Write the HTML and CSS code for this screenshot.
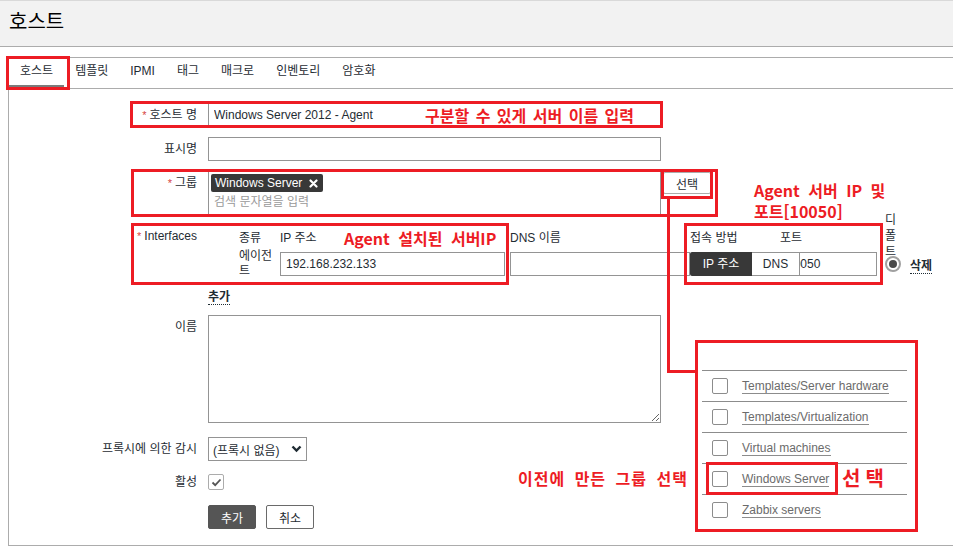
FILE: index.html
```html
<!DOCTYPE html>
<html lang="ko">
<head>
  <meta charset="UTF-8" />
  <meta name="viewport" content="width=device-width,initial-scale=1.0" />
  <title>호스트</title>
  <link rel="stylesheet" href="styles.css">
</head>
<body>
  <header class="page-header">
    <h1>호스트</h1>
  </header>

  <div class="content">
    <ul class="tabs">
      <li class="active">호스트</li>
      <li>템플릿</li>
      <li>IPMI</li>
      <li>태그</li>
      <li>매크로</li>
      <li>인벤토리</li>
      <li>암호화</li>
    </ul>

    <div class="form">
      <div class="label"><span class="star">*</span>호스트 명</div>
      <div><input class="text wide" value="Windows Server 2012 - Agent"></div>

      <div class="label">표시명</div>
      <div><input class="text wide" value=""></div>

      <div class="label"><span class="star">*</span>그룹</div>
      <div class="group-field">
        <div class="multiselect">
          <span class="chip">Windows Server
            <svg width="9" height="9" viewBox="0 0 9 9"><path d="M1.5 1.5 L7.5 7.5 M7.5 1.5 L1.5 7.5" stroke="#fff" stroke-width="2.2" stroke-linecap="round"/></svg>
          </span>
          <div class="placeholder">검색 문자열을 입력</div>
        </div>
        <button class="select-btn">선택</button>
      </div>

      <div class="label label-iface"><span class="star">*</span>Interfaces</div>
      <div class="iface">
        <span></span>
        <span>종류</span>
        <span>IP 주소</span>
        <span>DNS 이름</span>
        <span>접속 방법</span>
        <span>포트</span>
        <span class="default-head">디폴트</span>
        <span></span>

        <span></span>
        <span class="type">에이전트</span>
        <input class="text ip" value="192.168.232.133">
        <input class="text dns" value="">
        <div class="toggle"><span class="on">IP 주소</span><span class="off">DNS</span></div>
        <input class="text port" value="10050">
        <span class="radio"></span>
        <span class="remove"><a class="link">삭제</a></span>
      </div>

      <div></div>
      <div class="add-row"><a class="link">추가</a></div>

      <div class="label">이름</div>
      <div><textarea class="desc"></textarea></div>

      <div class="label">프록시에 의한 감시</div>
      <div>
        <div class="select">(프록시 없음)
          <svg width="11" height="8" viewBox="0 0 11 8"><path d="M1.5 1.5 L5.5 5.5 L9.5 1.5" fill="none" stroke="#1f2c33" stroke-width="2.4"/></svg>
        </div>
      </div>

      <div class="label label-check">활성</div>
      <div class="check-row">
        <span class="check">
          <svg width="13" height="13" viewBox="0 0 13 13"><path d="M2.5 6.5 L5.2 9.2 L10.5 3.5" fill="none" stroke="#555" stroke-width="1.8"/></svg>
        </span>
      </div>

      <div></div>
      <div class="buttons">
        <button class="btn btn-main">추가</button>
        <button class="btn btn-alt">취소</button>
      </div>
    </div>
  </div>

  <ul class="group-list">
    <li><span class="box"></span><span class="name">Templates/Server hardware</span></li>
    <li><span class="box"></span><span class="name">Templates/Virtualization</span></li>
    <li><span class="box"></span><span class="name">Virtual machines</span></li>
    <li><span class="box"></span><span class="name">Windows Server</span></li>
    <li><span class="box"></span><span class="name">Zabbix servers</span></li>
  </ul>

  <!-- annotations -->
  <div class="mark mark-tab"></div>
  <div class="mark mark-host"></div>
  <div class="mark mark-group"></div>
  <div class="mark mark-pick"></div>
  <div class="mark mark-iface"></div>
  <div class="mark mark-conn"></div>
  <div class="mark mark-list"></div>
  <div class="mark mark-win"></div>
  <div class="wire wire-down"></div>
  <div class="wire wire-right"></div>

  <div class="note note-host">구분할 수 있게 서버 이름 입력</div>
  <div class="note note-iface">Agent 설치된 서버IP</div>
  <div class="note note-port">Agent 서버 IP 및</div>
  <div class="note note-port2">포트[10050]</div>
  <div class="note note-prev">이전에 만든 그룹 선택</div>
  <div class="note note-pick">선택</div>
</body>
</html>
```

FILE: styles.css
```css
html {
  overflow: hidden;
}

body {
  margin: 0;
  font-family: "Liberation Sans", "Noto Sans CJK KR", sans-serif;
  font-size: 12px;
  color: #1f2c33;
  background: #fff;
  position: relative;
}

.page-header {
  height: 45px;
  background: #f2f2f2;
  border-top: 1px solid #d9d9d9;
  border-bottom: 1px solid #acacac;
  padding-left: 9px;
}

.page-header h1 {
  margin: 0;
  font-size: 20px;
  font-weight: normal;
  line-height: 43px;
  color: #000;
}

.content {
  margin: 10px -1px 0 8px;
  height: 489px;
  box-sizing: border-box;
  border: 1px solid #acacac;
}

.tabs {
  display: flex;
  list-style: none;
  margin: 0;
  padding: 0;
  border-bottom: 1px solid #acacac;
}

.tabs li {
  padding: 0 11px;
  line-height: 27px;
  border-bottom: 3px solid transparent;
}

.tabs li.active {
  border-bottom-color: #7b7b7b;
}

.form {
  display: grid;
  grid-template-columns: 188px auto;
  column-gap: 11px;
  row-gap: 10px;
  padding-top: 14px;
  align-items: start;
}

.label {
  text-align: right;
  line-height: 24px;
  white-space: nowrap;
}

.label-iface {
  line-height: 22px;
}

.label-check {
  line-height: 22px;
}

.star {
  color: #d64541;
  font-size: 11px;
  margin-right: 3px;
}

.text {
  box-sizing: border-box;
  height: 24px;
  border: 1px solid #949494;
  padding: 0 5px;
  font: inherit;
  color: #1f2c33;
  background: #fff;
  outline: none;
  margin: 0;
}

.wide {
  width: 453px;
}

.group-field {
  display: flex;
  align-items: flex-start;
  gap: 2px;
}

.multiselect {
  box-sizing: border-box;
  width: 453px;
  height: 44px;
  border: 1px solid #949494;
  padding: 2px;
}

.chip {
  display: inline-flex;
  align-items: center;
  gap: 7px;
  height: 18px;
  padding: 0 5px 0 4px;
  background: #383838;
  color: #fff;
  border-radius: 2px;
}

.placeholder {
  color: #9a9a9a;
  padding-left: 3px;
  margin-top: 3px;
  line-height: 14px;
}

.select-btn {
  box-sizing: border-box;
  width: 48px;
  height: 22px;
  margin-top: 1px;
  border: 1px solid #acacac;
  border-radius: 2px;
  background: #fff;
  font: inherit;
  color: #1f2c33;
  padding: 0;
}

.iface {
  display: grid;
  grid-template-columns: 31px 41px 230px 180px 90px 105px 16px auto;
  grid-template-rows: 22px 30px;
  row-gap: 2px;
  align-items: center;
}

.default-head {
  width: 12px;
  line-height: 16px;
  margin: -13px 0;
}

.type {
  line-height: 15px;
}

.ip {
  width: 225px;
}

.dns {
  width: 180px;
}

.toggle {
  display: flex;
  width: 110px;
  height: 24px;
  position: relative;
  z-index: 1;
  line-height: 24px;
  text-align: center;
}

.toggle .on {
  width: 62px;
  background: #383838;
  color: #fff;
  border-radius: 2px 0 0 2px;
}

.toggle .off {
  width: 48px;
  box-sizing: border-box;
  background: #fff;
  border: 1px solid #949494;
  border-left: none;
  line-height: 22px;
}

.port {
  width: 97px;
  padding-left: 6px;
}

.radio {
  box-sizing: border-box;
  width: 16px;
  height: 16px;
  border-radius: 50%;
  border: 2px solid #a0a0a0;
  background: #fff;
  display: flex;
  align-items: center;
  justify-content: center;
}

.radio::after {
  content: "";
  width: 8px;
  height: 8px;
  border-radius: 50%;
  background: #4a4a4a;
}

.remove {
  padding-left: 9px;
}

.link {
  font-weight: bold;
  color: #1f2c33;
  border-bottom: 1px dotted #1f2c33;
  cursor: pointer;
}

.add-row {
  line-height: 16px;
}

.desc {
  display: block;
  box-sizing: border-box;
  width: 453px;
  height: 108px;
  border: 1px solid #949494;
  margin: 0 0 4px;
  font: inherit;
}

.select {
  box-sizing: border-box;
  display: inline-flex;
  align-items: center;
  justify-content: space-between;
  width: 99px;
  height: 24px;
  border: 1px solid #949494;
  padding: 0 4px 0 4px;
}

.check-row {
  height: 22px;
}

.check {
  box-sizing: border-box;
  display: flex;
  align-items: center;
  justify-content: center;
  width: 16px;
  height: 16px;
  margin-top: 3px;
  border: 1px solid #acacac;
  border-radius: 2px;
}

.buttons {
  display: flex;
  gap: 10px;
  margin-top: 2px;
}

.btn {
  box-sizing: border-box;
  width: 48px;
  height: 24px;
  border-radius: 2px;
  font: inherit;
  padding: 0;
}

.btn-main {
  background: #555;
  border: 1px solid #555;
  color: #fff;
}

.btn-alt {
  background: #fff;
  border: 1px solid #6a6a6a;
  color: #1f2c33;
}

/* group picker popup */
.group-list {
  position: absolute;
  left: 702px;
  top: 340px;
  width: 205px;
  margin: 0;
  padding: 30px 0 0;
  list-style: none;
  background: #fff;
}

.group-list li {
  height: 30px;
  border-top: 1px solid #8c8c8c;
  display: flex;
  align-items: center;
  padding-left: 10px;
}

.group-list .box {
  box-sizing: border-box;
  width: 16px;
  height: 16px;
  border: 1px solid #8c8c8c;
  border-radius: 2px;
  margin-right: 14px;
}

.group-list .name {
  color: #6b6b6b;
  line-height: 14px;
  border-bottom: 1px solid #8c8c8c;
}

/* red annotations */
.mark {
  position: absolute;
  box-sizing: border-box;
  border: 3px solid #ed1c24;
}

.mark-tab { left: 6px; top: 56px; width: 64px; height: 34px; }
.mark-host { left: 130px; top: 101px; width: 533px; height: 27px; }
.mark-group { left: 131px; top: 169px; width: 587px; height: 48px; }
.mark-pick { left: 661px; top: 169px; width: 52px; height: 30px; }
.mark-iface { left: 131px; top: 223px; width: 378px; height: 62px; }
.mark-conn { left: 684px; top: 223px; width: 199px; height: 62px; }
.mark-list { left: 695px; top: 340px; width: 223px; height: 192px; }
.mark-win { left: 706px; top: 462px; width: 132px; height: 33px; }

.wire {
  position: absolute;
  background: #ed1c24;
}

.wire-down { left: 667px; top: 199px; width: 3px; height: 174px; }
.wire-right { left: 667px; top: 370px; width: 29px; height: 3px; }

.note {
  position: absolute;
  color: #ed1c24;
  font-family: "Noto Sans CJK KR", sans-serif;
  font-size: 16px;
  font-weight: bold;
  line-height: 18px;
  word-spacing: 4px;
  white-space: nowrap;
}

.note-host { left: 425px; top: 106px; word-spacing: 2px; }
.note-iface { left: 344px; top: 229px; }
.note-port { left: 754px; top: 181px; }
.note-port2 { left: 754px; top: 202px; }
.note-prev { left: 518px; top: 469px; letter-spacing: 1px; }
.note-pick { left: 842px; top: 467px; font-size: 20px; line-height: 22px; letter-spacing: 5px; }
```
